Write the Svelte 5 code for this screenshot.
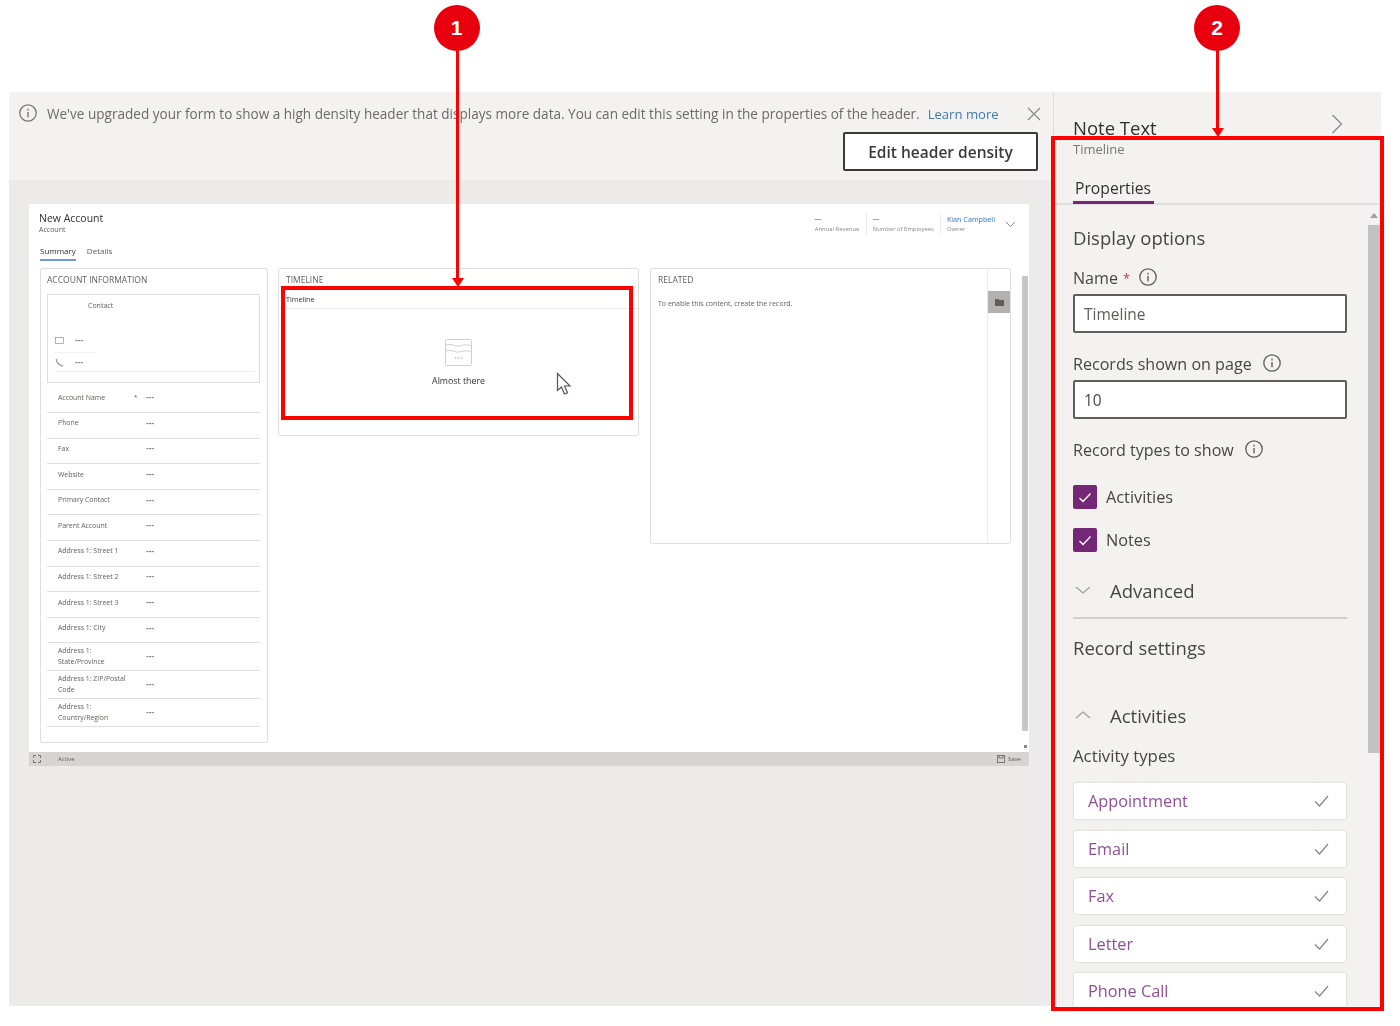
<script>
  const fields = [
    { label: 'Account Name', required: true },
    { label: 'Phone' },
    { label: 'Fax' },
    { label: 'Website' },
    { label: 'Primary Contact' },
    { label: 'Parent Account' },
    { label: 'Address 1: Street 1' },
    { label: 'Address 1: Street 2' },
    { label: 'Address 1: Street 3' },
    { label: 'Address 1: City' },
    { label: 'Address 1: State/Province', tall: true },
    { label: 'Address 1: ZIP/Postal Code', tall: true },
    { label: 'Address 1: Country/Region', tall: true }
  ];

  const activityTypes = ['Appointment', 'Email', 'Fax', 'Letter', 'Phone Call'];
</script>

{#snippet info()}
  <svg class="info" width="20" height="20" viewBox="0 0 20 20" fill="none" stroke="currentColor">
    <circle cx="10" cy="10" r="8.2" stroke-width="1.3" />
    <path d="M10 9v5.2" stroke-width="1.4" />
    <path d="M10 5.8v1.6" stroke-width="1.4" />
  </svg>
{/snippet}

{#snippet chevron(d)}
  <svg class="chev" width="16" height="10" viewBox="0 0 16 10" fill="none" stroke="#a19f9d" stroke-width="1.3">
    <path {d} />
  </svg>
{/snippet}

<div class="page">
  <div class="frame">
    <div class="designer">
      <div class="notice">
        <div class="notice-line">
          {@render info()}
          <span class="notice-text">We've upgraded your form to show a high density header that displays more data. You can edit this setting in the properties of the header.</span>
          <span class="learn">Learn more</span>
          <svg class="close" width="14" height="14" viewBox="0 0 14 14" stroke="#8a8886" stroke-width="1.2">
            <path d="M1 1l12 12M13 1L1 13" />
          </svg>
        </div>
        <button class="density">Edit header density</button>
      </div>

      <div class="canvas">
        <div class="form">
          <div class="form-head">
            <div class="title-block">
              <div class="form-title">New Account</div>
              <div class="form-sub">Account</div>
            </div>
            <div class="head-fields">
              <div class="head-field">
                <div class="dash">---</div>
                <div class="head-label">Annual Revenue</div>
              </div>
              <div class="head-field">
                <div class="dash">---</div>
                <div class="head-label">Number of Employees</div>
              </div>
              <div class="head-field">
                <div class="owner">Kian Campbell</div>
                <div class="head-label">Owner</div>
              </div>
              <svg width="11" height="7" viewBox="0 0 11 7" fill="none" stroke="#8a8886">
                <path d="M1 1l4.5 4.5L10 1" />
              </svg>
            </div>
          </div>

          <div class="form-tabs">
            <span class="form-tab active">Summary</span>
            <span class="form-tab">Details</span>
          </div>

          <div class="form-body">
            <section class="col account">
              <h4>ACCOUNT INFORMATION</h4>
              <div class="contact">
                <div class="contact-name">Contact</div>
                <div class="contact-row mail">
                  <svg width="9" height="7" viewBox="0 0 9 7" fill="none" stroke="#a19f9d" stroke-width=".8">
                    <rect x=".5" y=".5" width="8" height="6" />
                  </svg>
                  <span class="val">---</span>
                </div>
                <div class="contact-row phone">
                  <svg width="9" height="9" viewBox="0 0 9 9" fill="none" stroke="#a19f9d" stroke-width="1.5">
                    <path d="M1.5 1c-.8 2.8 2.500 6.500 6.500 7" />
                  </svg>
                  <span class="val">---</span>
                </div>
              </div>
              {#each fields as field}
                <div class="field" class:tall={field.tall}>
                  <span class="field-label">{field.label}</span>
                  <span class="req">{field.required ? '*' : ''}</span>
                  <span class="val">---</span>
                </div>
              {/each}
            </section>

            <section class="col timeline">
              <h4>TIMELINE</h4>
              <div class="timeline-name">Timeline</div>
              <div class="empty">
                <svg width="27" height="27" viewBox="0 0 27 27" fill="none" stroke="#d2d0ce" stroke-width="1">
                  <rect x=".5" y=".5" width="26" height="26" rx="1" />
                  <path d="M1 6c6-2 9 2 13 1s8-2 12 0M1 12c6-2 9 2 13 1s8-2 12 0" />
                  <path d="M10 19h1.500M13 19h1.500M16 19h1.500" stroke="#a19f9d" />
                </svg>
                <div class="almost">Almost there</div>
              </div>
            </section>

            <section class="col related">
              <div class="related-main">
                <h4>RELATED</h4>
                <p>To enable this content, create the record.</p>
              </div>
              <div class="rail">
                <div class="rail-tile">
                  <svg width="9" height="7" viewBox="0 0 9 7"><path d="M0 0h3.500l1 1H9v6H0z" fill="#605e5c" /></svg>
                </div>
              </div>
            </section>

            <div class="form-scroll">
              <div class="form-thumb"></div>
              <div class="form-dot"></div>
            </div>
          </div>
        </div>

        <div class="status">
          <div class="status-left">
            <svg width="8" height="8" viewBox="0 0 8 8" fill="none" stroke="#797775">
              <path d="M.5 3V.500H3M5 .500h2.500V3M7.500 5v2.500H5M3 7.500H.5V5" />
            </svg>
            <span>Active</span>
          </div>
          <div class="status-right">
            <svg width="8" height="8" viewBox="0 0 8 8" fill="none" stroke="#797775">
              <rect x=".5" y=".5" width="7" height="7" />
              <path d="M2 .5v2.500h4V.500" />
            </svg>
            <span>Save</span>
          </div>
        </div>
      </div>
    </div>

    <aside class="panel">
      <div class="panel-head">
        <div>
          <div class="panel-title">Note Text</div>
          <div class="panel-sub">Timeline</div>
        </div>
        <svg class="panel-chev" width="12" height="20" viewBox="0 0 12 20" fill="none" stroke="#8d8390" stroke-width="1.300">
          <path d="M1.500 1l9 9-9 9" />
        </svg>
      </div>
      <div class="panel-tabs"><span class="panel-tab">Properties</span></div>

      <div class="panel-scroll">
        <div class="panel-body">
          <h3 class="display">Display options</h3>

          <div class="label name-label">
            Name <span class="star">*</span>
            {@render info()}
          </div>
          <div class="input">Timeline</div>

          <div class="label records-label">
            Records shown on page
            {@render info()}
          </div>
          <div class="input ten">10</div>

          <div class="label types-label">
            Record types to show
            {@render info()}
          </div>

          <label class="check first">
            <span class="box">
              <svg width="14" height="11" viewBox="0 0 14 11" fill="none" stroke="#fff" stroke-width="1.300"><path d="M1.500 6l3.500 3.500 7.500-8" /></svg>
            </span>
            Activities
          </label>
          <label class="check">
            <span class="box">
              <svg width="14" height="11" viewBox="0 0 14 11" fill="none" stroke="#fff" stroke-width="1.300"><path d="M1.500 6l3.500 3.500 7.500-8" /></svg>
            </span>
            Notes
          </label>

          <div class="expander advanced">
            {@render chevron('M1 2l7 6 7-6')}
            <span>Advanced</span>
          </div>
          <div class="rule"></div>

          <h3 class="settings">Record settings</h3>

          <div class="expander activities">
            {@render chevron('M1 8l7-6 7 6')}
            <span>Activities</span>
          </div>
          <div class="label activity-types">Activity types</div>

          <div class="cards">
            {#each activityTypes as type}
              <div class="card">
                <span>{type}</span>
                <svg width="15" height="12" viewBox="0 0 15 12" fill="none" stroke="#8e7f92" stroke-width="1.200">
                  <path d="M1 6.500l4.500 4.500L14 1" />
                </svg>
              </div>
            {/each}
          </div>
        </div>
        <div class="panel-bar">
          <svg width="8" height="5" viewBox="0 0 8 5"><path d="M4 0l4 5H0z" fill="#a19f9d" /></svg>
          <div class="panel-thumb"></div>
        </div>
      </div>
    </aside>
  </div>

  <!-- cursor over the timeline control -->
  <svg class="cursor" width="16" height="24" viewBox="0 0 16 24" fill="#fff" stroke="#555" stroke-width="1.200">
    <path d="M1.500 1.500v17l4-3.500 3 7 3-1.300-3-6.700h5.500z" />
  </svg>

  <!-- callouts -->
  <div class="callout-box one"></div>
  <div class="callout-box two"></div>
  <div class="badge b1">1</div>
  <div class="badge b2">2</div>
  <div class="stem s1"></div>
  <div class="stem s2"></div>
  <div class="arrow a1"></div>
  <div class="arrow a2"></div>
</div>

<style>
  :global(body) {
    margin: 0;
    background: #fff;
  }

  .page {
    position: relative;
    width: 1400px;
    height: 1026px;
    padding-top: 92px;
    box-sizing: border-box;
    overflow: hidden;
    font-family: "Open Sans", "Noto Sans", sans-serif;
    color: #323130;
  }

  .frame {
    display: flex;
    width: 1372px;
    height: 914px;
    margin-left: 9px;
    overflow: hidden;
    background: #f3f2f1;
  }

  .designer {
    width: 1044px;
    flex: none;
    display: flex;
    flex-direction: column;
  }

  .notice {
    height: 88px;
    flex: none;
    box-sizing: border-box;
    padding: 12px 12px 0 9px;
    background: #f3f2f1;
    filter: blur(0.4px);
  }

  .notice-line {
    display: flex;
    align-items: center;
    height: 20px;
    color: #797775;
  }

  .notice-line .info {
    flex: none;
    color: #797775;
    margin-top: -2px;
  }

  .notice-text {
    margin-left: 9px;
    font-size: 13.550px;
    white-space: nowrap;
    color: #6b6a68;
  }

  .learn {
    margin-left: 8px;
    font-size: 13.100px;
    white-space: nowrap;
    color: #3a7cb0;
  }

  .close {
    margin-left: auto;
    margin-right: 0;
  }

  .density {
    display: block;
    width: 195px;
    height: 39px;
    margin: 8px 3px 0 auto;
    border: 2px solid #3b3a39;
    border-radius: 2px;
    background: #fff;
    font: 600 15.500px "Open Sans", sans-serif;
    color: #3b3a39;
  }

  .canvas {
    flex: 1;
    padding: 24px 24px 0 20px;
    background: #ecebe9;
  }

  .form {
    height: 548px;
    background: #fff;
    display: flex;
    flex-direction: column;
    filter: blur(0.45px);
  }

  .form-head {
    display: flex;
    justify-content: space-between;
    padding: 7px 13px 0 10px;
    height: 24px;
  }

  .form-title {
    font-size: 10.500px;
    line-height: 14px;
    color: #323130;
  }

  .form-sub {
    font-size: 7px;
    line-height: 10px;
    color: #605e5c;
  }

  .head-fields {
    display: flex;
    align-items: center;
    height: 26px;
    gap: 6px;
  }

  .head-field {
    height: 20px;
    min-width: 45px;
    padding-right: 6px;
    border-right: 1px solid #edebe9;
    font-size: 5.900px;
    line-height: 10px;
    color: #8a8886;
    white-space: nowrap;
  }

  .dash {
    font-weight: 700;
    font-size: 7px;
  }

  .head-field:last-of-type {
    border-right: 0;
    padding-right: 4px;
  }

  .owner {
    color: #2b78d8;
    font-size: 7.200px;
  }

  .form-tabs {
    display: flex;
    gap: 11px;
    margin: 6px 0 0 11px;
    height: 27px;
  }

  .form-tab {
    height: 14px;
    padding-top: 4px;
    font-size: 8px;
    line-height: 12px;
    color: #605e5c;
  }

  .form-tab.active {
    color: #323130;
    border-bottom: 2px solid #6b9bd8;
  }

  .form-body {
    flex: 1;
    display: flex;
    align-items: flex-start;
    padding-left: 11px;
  }

  .col {
    box-sizing: border-box;
    background: #fff;
    border: 1px solid #e1dfdd;
    border-radius: 2px;
  }

  .col h4 {
    margin: 0;
    font-size: 8.500px;
    line-height: 10px;
    font-weight: 400;
    color: #605e5c;
    white-space: nowrap;
  }

  .account {
    width: 228px;
    height: 475px;
    padding: 6px 7px 0 6px;
  }

  .contact {
    box-sizing: border-box;
    height: 89px;
    margin-top: 9px;
    margin-bottom: 4.500px;
    padding: 6px 0 0 7px;
    border: 1px solid #e1dfdd;
  }

  .contact-name {
    margin-left: 33px;
    font-size: 7px;
    line-height: 10px;
    color: #605e5c;
  }

  .contact-row {
    display: flex;
    align-items: center;
    gap: 11px;
    height: 10px;
    width: 40px;
  }

  .contact-row.mail {
    margin-top: 24px;
    padding-bottom: 7px;
    border-bottom: 1px solid #f3f2f1;
  }

  .contact-row.phone {
    margin-top: 4px;
    width: 200px;
    padding-bottom: 4px;
    border-bottom: 1px solid #edebe9;
  }

  .val {
    font-size: 8.500px;
    line-height: 10px;
    font-weight: 700;
    color: #8a8886;
  }

  .field {
    display: flex;
    align-items: center;
    box-sizing: border-box;
    height: 25.600px;
    padding-bottom: 5px;
    border-bottom: 1px solid #e1dfdd;
  }

  .field.tall {
    height: 27.800px;
    padding-bottom: 1px;
  }

  .field-label {
    width: 75px;
    margin-left: 11px;
    font-size: 6.900px;
    line-height: 11px;
    color: #605e5c;
  }

  .req {
    width: 13px;
    padding-left: 1px;
    box-sizing: border-box;
    font-size: 6px;
    color: #a4262c;
  }

  .timeline {
    width: 361px;
    height: 168px;
    margin-left: 10px;
    padding: 6px 7px 0;
  }

  .timeline-name {
    margin: 9px -7px 0;
    padding: 0 0 4px 7px;
    font-size: 7.200px;
    line-height: 10px;
    color: #323130;
    border-bottom: 1px solid #edebe9;
  }

  .empty {
    display: flex;
    flex-direction: column;
    align-items: center;
    padding-top: 30px;
  }

  .almost {
    margin-top: 9px;
    font-size: 8.800px;
    line-height: 12px;
    color: #323130;
  }

  .related {
    display: flex;
    width: 361px;
    height: 276px;
    margin-left: 11px;
  }

  .related-main {
    flex: 1;
    padding: 6px 7px 0;
  }

  .related-main p {
    margin: 14px 0 0;
    font-size: 7px;
    line-height: 10px;
    color: #605e5c;
    white-space: nowrap;
  }

  .rail {
    width: 22px;
    border-left: 1px solid #edebe9;
    padding-top: 22px;
  }

  .rail-tile {
    display: flex;
    align-items: center;
    justify-content: center;
    height: 22px;
    background: #b4b2b0;
  }

  .form-scroll {
    width: 6px;
    height: 484px;
    margin-left: 11px;
    padding-top: 8px;
    box-sizing: border-box;
  }

  .form-thumb {
    height: 455px;
    background: #c8c6c4;
  }

  .form-dot {
    width: 3px;
    height: 3px;
    margin: 14px 0 0 2px;
    background: #8a8886;
  }

  .status {
    display: flex;
    justify-content: space-between;
    align-items: center;
    height: 14px;
    padding: 0 8px 0 4px;
    background: #d6d5d4;
    font-size: 6px;
    color: #605e5c;
    filter: blur(0.4px);
  }

  .status-left {
    display: flex;
    align-items: center;
    gap: 17px;
  }

  .status-right {
    display: flex;
    align-items: center;
    gap: 3px;
  }

  .panel {
    flex: 1;
    min-width: 0;
    display: flex;
    flex-direction: column;
    border-left: 1px solid #e1dfdd;
    background: #f3f2f1;
    filter: blur(0.3px);
  }

  .panel-head {
    display: flex;
    justify-content: space-between;
    height: 81px;
    flex: none;
    box-sizing: border-box;
    padding: 24px 38px 0 19px;
  }

  .panel-title {
    font-size: 18.500px;
    line-height: 24px;
    font-weight: 500;
    color: #323130;
  }

  .panel-sub {
    font-size: 13px;
    line-height: 18px;
    color: #797775;
  }

  .panel-chev {
    margin-top: -2px;
  }

  .panel-tabs {
    flex: none;
    height: 32px;
    box-sizing: border-box;
    padding-left: 19px;
    border-bottom: 2px solid #e1dfdd;
  }

  .panel-tab {
    display: inline-block;
    width: 81px;
    height: 31px;
    box-sizing: border-box;
    padding-left: 2px;
    border-bottom: 3px solid #742774;
    font-size: 15.700px;
    line-height: 30px;
    color: #323130;
  }

  .panel-scroll {
    flex: 1;
    display: flex;
    min-height: 0;
    overflow: hidden;
  }

  .panel-body {
    width: 274px;
    margin-left: 19px;
    flex: none;
  }

  .display,
  .settings {
    margin: 0;
    font-size: 18.500px;
    line-height: 26px;
    font-weight: 500;
    color: #484644;
  }

  .display {
    margin-top: 20px;
  }

  .label {
    display: flex;
    align-items: center;
    gap: 10px;
    height: 22px;
    font-size: 16.100px;
    color: #484644;
    white-space: nowrap;
  }

  .label .info {
    color: #605e5c;
    margin-top: -2px;
  }

  .name-label {
    margin-top: 16px;
    gap: 5px;
  }

  .name-label .info {
    margin-left: 3px;
  }

  .star {
    color: #c4314b;
    font-size: 13px;
  }

  .input {
    box-sizing: border-box;
    height: 39px;
    margin-top: 5px;
    padding-left: 9px;
    border: 2px solid #605e5c;
    border-radius: 2px;
    background: #fff;
    font-size: 15.500px;
    line-height: 36px;
    color: #605e5c;
  }

  .ten {
    color: #484644;
  }

  .records-label {
    margin-top: 20px;
  }

  .types-label {
    margin-top: 20px;
  }

  .check {
    display: flex;
    align-items: center;
    gap: 9px;
    height: 24px;
    margin-top: 19px;
    font-size: 16.300px;
    color: #484644;
  }

  .check.first {
    margin-top: 24px;
  }

  .box {
    display: flex;
    align-items: center;
    justify-content: center;
    width: 24px;
    height: 24px;
    border-radius: 2px;
    background: #742774;
  }

  .expander {
    display: flex;
    align-items: center;
    gap: 19px;
    height: 28px;
    padding-left: 2px;
    font-size: 18.500px;
    font-weight: 500;
    color: #484644;
  }

  .advanced {
    margin-top: 24px;
  }

  .rule {
    height: 2px;
    margin-top: 13px;
    background: #d2d0ce;
  }

  .settings {
    margin-top: 16px;
  }

  .activities {
    margin-top: 40px;
  }

  .activity-types {
    margin-top: 15px;
    font-size: 16.800px;
    font-weight: 500;
  }

  .cards {
    display: flex;
    flex-direction: column;
    gap: 11.500px;
    margin-top: 17px;
    margin-left: 1px;
    width: 272px;
  }

  .card {
    display: flex;
    align-items: center;
    justify-content: space-between;
    box-sizing: border-box;
    flex: none;
    height: 36px;
    padding: 0 17px 0 14px;
    border-radius: 2px;
    background: #fff;
    box-shadow: 0 0 2px rgba(0, 0, 0, 0.22);
    font-size: 16.300px;
    font-weight: 500;
    color: #8f4f96;
  }

  .panel-bar {
    width: 12px;
    margin-left: 21px;
    padding-top: 7px;
    text-align: center;
    line-height: 0;
  }

  .panel-thumb {
    height: 528px;
    margin-top: 7px;
    background: #c2c2c0;
  }

  .cursor {
    position: absolute;
    left: 556px;
    top: 372px;
  }

  .callout-box {
    position: absolute;
    box-sizing: border-box;
    border: 4px solid #f00;
  }

  .callout-box.one {
    left: 281px;
    top: 286px;
    width: 352px;
    height: 134px;
  }

  .callout-box.two {
    left: 1051px;
    top: 136px;
    width: 333px;
    height: 875px;
  }

  .badge {
    position: absolute;
    top: 5px;
    width: 46px;
    height: 46px;
    border-radius: 50%;
    background: #e8000f;
    color: #fff;
    font: 700 21px/46px "Liberation Sans", sans-serif;
    text-align: center;
  }

  .b1 {
    left: 433.500px;
  }

  .b2 {
    left: 1194px;
  }

  .stem {
    position: absolute;
    top: 50px;
    width: 3px;
    background: #f00;
  }

  .s1 {
    left: 456px;
    height: 228px;
  }

  .s2 {
    left: 1216px;
    height: 78px;
  }

  .arrow {
    position: absolute;
    width: 0;
    height: 0;
    border-left: 6px solid transparent;
    border-right: 6px solid transparent;
    border-top: 9px solid #f00;
  }

  .a1 {
    left: 451.500px;
    top: 278px;
  }

  .a2 {
    left: 1211.500px;
    top: 128px;
  }
</style>
